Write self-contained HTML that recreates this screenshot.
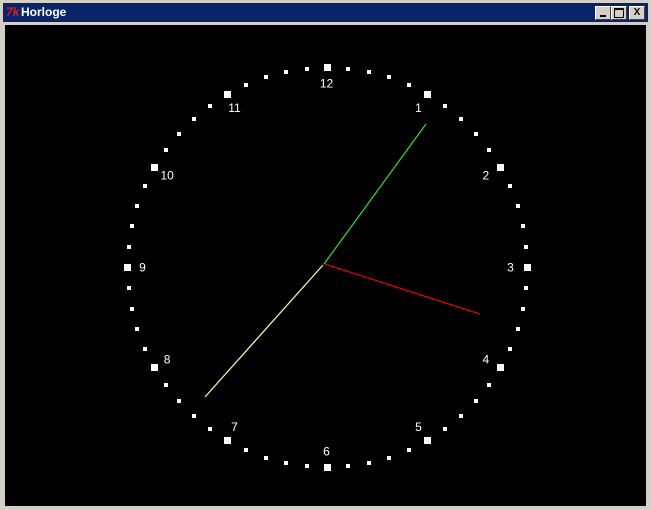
<!DOCTYPE html>
<html><head><style>
body{margin:0;width:651px;height:510px;background:#d4d0c8;position:relative;overflow:hidden;font-family:"Liberation Sans",sans-serif}
#tb{position:absolute;left:3px;top:3px;width:645px;height:19px;background:#0a246a}
#tb .t{position:absolute;left:18px;top:2px;color:#fff;font-weight:bold;font-size:12px}
#tb .ic{position:absolute;left:3px;top:2px;color:#d02020;font-weight:bold;font-style:italic;font-size:12px}
.b{position:absolute;top:3px;width:14px;height:12px;background:#d4d0c8;border:1px solid;border-color:#fff #404040 #404040 #fff;font-size:10px;line-height:12px;text-align:center;font-weight:bold}
#cv{position:absolute;left:5px;top:25px;width:641px;height:481px;background:#000}
</style></head><body>
<div id="tb"><span class="ic">7k</span><span class="t">Horloge</span>
<div class="b" style="left:592px"><div style="position:absolute;left:4px;top:8px;width:6px;height:2px;background:#000"></div></div>
<div class="b" style="left:608px"><div style="position:absolute;left:2px;top:1px;width:8px;height:7px;border:1px solid #000;border-top-width:2px"></div></div>
<div class="b" style="left:626px">X</div>
</div>
<div id="cv"></div>
<svg id="s" width="651" height="510" style="position:absolute;left:0;top:0" xmlns="http://www.w3.org/2000/svg">
<line x1="324" y1="264" x2="426" y2="124" stroke="#30e030" stroke-width="1.2"/>
<line x1="325" y1="264" x2="480" y2="314" stroke="#e00000" stroke-width="1.2"/>
<line x1="323" y1="265" x2="205" y2="397" stroke="#ffffa0" stroke-width="1.2"/>
</svg>
<script>
var s=document.getElementById('s'),ns='http://www.w3.org/2000/svg',cx=327.5,cy=267.5;
for(var i=0;i<60;i++){var a=i*Math.PI/30,x=cx+200*Math.sin(a),y=cy-200*Math.cos(a),big=i%5==0,w=big?7:4;
var r=document.createElementNS(ns,'rect');r.setAttribute('x',Math.round(x-w/2));r.setAttribute('y',Math.round(y-w/2));r.setAttribute('width',w);r.setAttribute('height',w);r.setAttribute('fill','#fff');s.appendChild(r);
if(big){var h=i/5||12,t=document.createElementNS(ns,'text');t.setAttribute('x',cx-1+184*Math.sin(a));t.setAttribute('y',cy+4+184*Math.cos(a)*-1);t.setAttribute('fill','#fff');t.setAttribute('font-size','12');t.setAttribute('font-family','Liberation Sans, sans-serif');t.setAttribute('text-anchor','middle');t.textContent=h;s.appendChild(t);}}
</script>
</body></html>
